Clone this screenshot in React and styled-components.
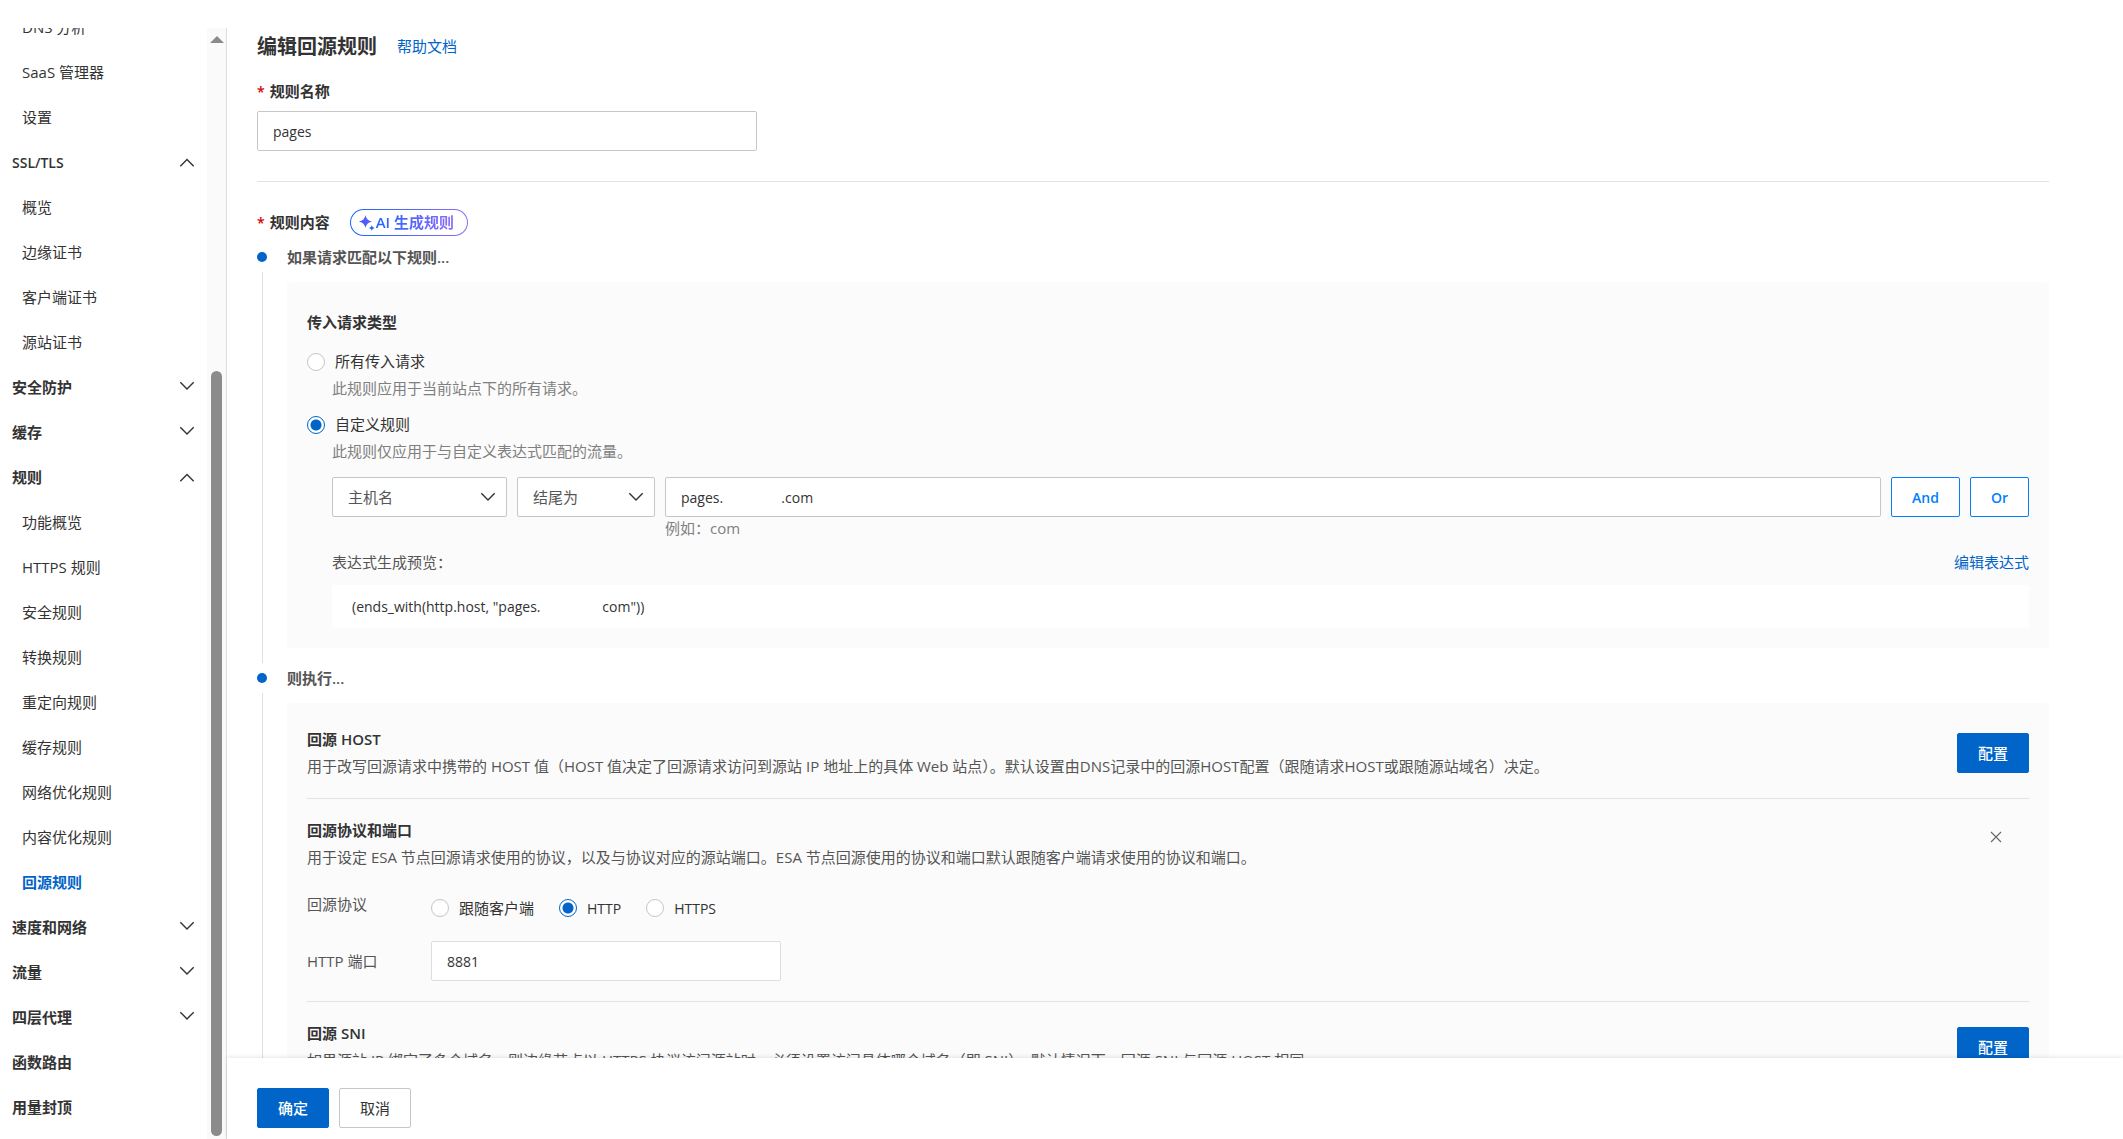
import * as React from "react"
import styled, { createGlobalStyle } from "styled-components"

const GlobalStyle = createGlobalStyle`
  * {
    box-sizing: border-box;
  }

  body {
    margin: 0;
    background: #fff;
  }

  body, button, input, select {
    font-family: "Open Sans", "Noto Sans CJK SC", sans-serif;
    font-size: 15px;
    line-height: 27px;
    color: #333;
  }
`;

const Page = styled.div`
  display: flex;
  height: 100vh;
  padding-top: 28px;
  overflow: hidden;
`;

/* sidebar */

const Sidebar = styled.aside`
  display: flex;
  flex: none;
  width: 227px;
  border-right: 1px solid #dcdcdc;
`;

/* the list is scrolled to its end */
const Nav = styled.nav`
  flex: 1;
  display: flex;
  flex-direction: column;
  justify-content: flex-end;
  padding-bottom: 9px;
  overflow: hidden;
`;

const NavLink = styled.a`
  flex: none;
  padding-left: 22px;
  line-height: 45px;
  color: ${(props) => (props.$active ? "#0064c8" : "#333")};
  font-weight: ${(props) => (props.$active ? 600 : 400)};
  text-decoration: none;
`;

const NavTopLink = styled(NavLink)`
  padding-left: 12px;
  font-weight: 600;
`;

const NavGroup = styled.button`
  flex: none;
  display: flex;
  align-items: center;
  justify-content: space-between;
  height: 45px;
  padding: 0 12px;
  border: 0;
  background: none;
  font-size: ${(props) => (props.$latin ? "14px" : "15px")};
  font-weight: 600;
  cursor: pointer;

  &[aria-expanded="false"] svg {
    margin-bottom: 4px;
  }
`;

const ScrollTrack = styled.div`
  display: flex;
  flex-direction: column;
  align-items: center;
  width: 19px;
  padding: 8px 0 3px;
  background: #fafafa;
`;

const ScrollArrow = styled.div`
  border: 7px solid transparent;
  border-top: 0;
  border-bottom-color: #8b8b8b;
`;

const ScrollRoom = styled.div`
  flex: 3 0 0;
`;

const ScrollThumb = styled.div`
  flex: 7 0 0;
  width: 11px;
  border-radius: 6px;
  background: #8b8b8b;
`;

/* main column */

const Main = styled.main`
  flex: 1;
  min-width: 0;
  display: flex;
  flex-direction: column;
`;

const Content = styled.div`
  flex: 1;
  min-height: 0;
  padding: 0 74px 0 30px;
  overflow: hidden;
`;

const TitleRow = styled.header`
  display: flex;
  align-items: center;
  gap: 20px;
  height: 36px;
  margin-bottom: 14px;
`;

const Title = styled.h1`
  margin: 0;
  font-size: 20px;
  font-weight: 600;
`;

const Link = styled.a`
  color: #0064c8;
  text-decoration: none;
`;

const FieldHead = styled.div`
  display: flex;
  align-items: center;
  gap: 20px;
  margin-bottom: 6px;
`;

const RequiredLabel = styled.label`
  font-weight: 600;

  &::before {
    content: "*";
    margin-right: 5px;
    font-size: 14px;
    color: #d50000;
  }
`;

const TextInput = styled.input`
  display: block;
  width: ${(props) => props.$width || "100%"};
  height: 40px;
  padding: 0 15px;
  border: 1px solid ${(props) => (props.$soft ? "#dedede" : "#c6c6c6")};
  border-radius: 2px;
  background: #fff;
  font-size: 14px;
  outline: 0;
`;

const Divider = styled.hr`
  margin: 30px 0 27px;
  border: 0;
  border-top: 1px solid #e3e3e3;
`;

const AiButton = styled.button`
  display: flex;
  align-items: center;
  gap: 1px;
  height: 27px;
  padding: 0 13px 0 8px;
  border: 1px solid transparent;
  border-radius: 14px;
  background: linear-gradient(#fff, #fff) padding-box,
    linear-gradient(90deg, #1766ff, #8f6bfa) border-box;
  cursor: pointer;
`;

const AiText = styled.span`
  font-weight: 600;
  line-height: 25px;
  color: transparent;
  background: linear-gradient(90deg, #1f66ff, #8f6bfa);
  background-clip: text;
`;

/* timeline steps */

const Step = styled.section`
  display: grid;
  grid-template-columns: 10px 1fr;
  column-gap: 20px;
`;

const Dot = styled.span`
  align-self: center;
  width: 10px;
  height: 10px;
  border-radius: 50%;
  background: #0064c8;
`;

const StepTitle = styled.h2`
  margin: 0;
  font-size: 15px;
  font-weight: 600;
  line-height: 30px;
  color: #555;
`;

const Rail = styled.div`
  justify-self: center;
  width: 1px;
  background: #e0e0e0;
`;

const Panel = styled.div`
  margin: 10px 0 15px;
  padding: ${(props) => props.$padding};
  border-radius: 4px;
  background: #fbfbfb;
`;

const PanelTitle = styled.h3`
  margin: 0 0 12px;
  font-size: 15px;
  font-weight: 600;
`;

const RadioLabel = styled.label`
  display: flex;
  align-items: center;
  gap: 10px;
  font-size: ${(props) => (props.$latin ? "14px" : "15px")};
`;

const Radio = styled.input`
  appearance: none;
  flex: none;
  width: 18px;
  height: 18px;
  margin: 0;
  border: 1px solid #c6c6c6;
  border-radius: 50%;
  background: #fff;

  &:checked {
    border-color: #0064c8;
    background: radial-gradient(circle, #0064c8 5px, #fff 6px);
  }
`;

const Indent = styled.div`
  padding-left: 25px;
`;

const Note = styled.p`
  margin: 0 0 ${(props) => props.$gap};
  color: #808080;
`;

const ConditionRow = styled.div`
  display: flex;
  align-items: flex-start;
  gap: 10px;
`;

const SelectBox = styled.div`
  position: relative;
  flex: none;
  width: ${(props) => props.$width};

  svg {
    position: absolute;
    top: 13px;
    right: 11px;
    pointer-events: none;
  }
`;

const Select = styled.select`
  appearance: none;
  display: block;
  width: 100%;
  height: 40px;
  padding: 0 15px;
  border: 1px solid #c6c6c6;
  border-radius: 2px;
  background: #fff;
  color: #555;
`;

const ValueField = styled.div`
  flex: 1;
  min-width: 0;
`;

const Hint = styled.p`
  margin: 0 0 9px;
  line-height: 23px;
  color: #808080;
`;

const PreviewHead = styled.div`
  display: flex;
  justify-content: space-between;
  margin-bottom: 9px;
  color: #555;
`;

const Preview = styled.pre`
  margin: 0;
  padding: 8px 20px;
  border-radius: 2px;
  background: #fff;
  font-family: inherit;
  font-size: 14px;
`;

/* buttons */

const Button = styled.button`
  flex: none;
  height: 40px;
  padding: 0 20px;
  border: 1px solid #c6c6c6;
  border-radius: 2px;
  background: #fff;
  cursor: pointer;
`;

const PrimaryButton = styled(Button)`
  border-color: #0064c8;
  background: #0064c8;
  color: #fff;
  font-weight: 500;
`;

const LogicButton = styled(Button)`
  border-color: #0080ff;
  color: #0080ff;
  font-size: 14px;
  font-weight: 600;
`;

const CloseButton = styled.button`
  display: flex;
  align-items: center;
  justify-content: center;
  width: 66px;
  height: 40px;
  padding: 0;
  border: 0;
  background: none;
  color: #666;
  cursor: pointer;
`;

/* origin settings */

const Setting = styled.div`
  padding: 18px 0;

  & + & {
    border-top: 1px solid #e3e3e3;
  }
`;

const SettingHead = styled.div`
  display: flex;
  align-items: ${(props) => (props.$open ? "flex-start" : "center")};
  justify-content: space-between;
`;

const SettingTitle = styled.h3`
  margin: 0;
  font-size: 15px;
  font-weight: 600;
`;

const SettingText = styled.p`
  margin: 0;
  color: #555;
`;

const FormGrid = styled.div`
  display: grid;
  grid-template-columns: 124px 1fr;
  row-gap: 16px;
  margin: 20px 0 2px;
`;

const FormLabel = styled.label`
  align-self: ${(props) => (props.$center ? "center" : "start")};
  color: #555;
`;

const RadioRow = styled.div`
  display: flex;
  align-items: center;
  gap: 25px;
  height: 34px;
`;

const Footer = styled.footer`
  z-index: 1;
  display: flex;
  gap: 10px;
  padding: 30px 30px 11px;
  background: #fff;
  box-shadow: 0 -1px 4px rgba(0, 0, 0, 0.1);
`;

const navItems = [
  { text: "DNS 分析" },
  { text: "SaaS 管理器" },
  { text: "设置" },
  { text: "SSL/TLS", group: true, open: true, latin: true },
  { text: "概览" },
  { text: "边缘证书" },
  { text: "客户端证书" },
  { text: "源站证书" },
  { text: "安全防护", group: true },
  { text: "缓存", group: true },
  { text: "规则", group: true, open: true },
  { text: "功能概览" },
  { text: "HTTPS 规则" },
  { text: "安全规则" },
  { text: "转换规则" },
  { text: "重定向规则" },
  { text: "缓存规则" },
  { text: "网络优化规则" },
  { text: "内容优化规则" },
  { text: "回源规则", active: true },
  { text: "速度和网络", group: true },
  { text: "流量", group: true },
  { text: "四层代理", group: true },
  { text: "函数路由", top: true },
  { text: "用量封顶", top: true },
]

const hostGap = " ".repeat(16)

const Chevron = ({ up }) => (
  <svg width="16" height="14" viewBox="0 0 16 14" fill="none" stroke="currentColor" strokeWidth="1.4">
    <path d={up ? "M1.3 10.3 8 3.6l6.7 6.7" : "M1.3 3.2 8 9.9l6.7-6.7"} />
  </svg>
)

const CloseIcon = () => (
  <svg width="12" height="12" viewBox="0 0 12 12" fill="none" stroke="currentColor" strokeWidth="1.1">
    <path d="M1 1l10 10M11 1 1 11" />
  </svg>
)

const Sparkles = () => (
  <svg width="16" height="16" viewBox="0 0 16 16">
    <defs>
      <linearGradient id="spark" x1="0" y1="1" x2="1" y2="0">
        <stop offset="0" stopColor="#1766ff" />
        <stop offset="1" stopColor="#8a55f5" />
      </linearGradient>
    </defs>
    <path fill="url(#spark)" d="M6.5 0c1 4 2.500 5.500 6.500 6.500-4 1-5.500 2.500-6.500 6.500-1-4-2.500-5.500-6.500-6.500 4-1 5.500-2.500 6.500-6.500z" />
    <path fill="#2a66ff" d="M12.800 10c.5 1.900 1.100 2.500 3 3-1.900.5-2.500 1.100-3 3-.5-1.900-1.100-2.500-3-3 1.900-.5 2.500-1.100 3-3z" />
  </svg>
)

const SideMenu = () => (
  <Sidebar>
    <Nav>
      {navItems.map((item) => {
        if (item.group) {
          return (
            <NavGroup key={item.text} type="button" $latin={item.latin} aria-expanded={!!item.open}>
              {item.text}
              <Chevron up={item.open} />
            </NavGroup>
          )
        }
        const Item = item.top ? NavTopLink : NavLink
        return (
          <Item key={item.text} href="#" $active={item.active}>
            {item.text}
          </Item>
        )
      })}
    </Nav>
    <ScrollTrack>
      <ScrollArrow />
      <ScrollRoom />
      <ScrollThumb />
    </ScrollTrack>
  </Sidebar>
)

const MatchPanel = () => (
  <Panel $padding="27px 20px 20px">
    <PanelTitle>传入请求类型</PanelTitle>
    <RadioLabel>
      <Radio type="radio" name="match" />
      所有传入请求
    </RadioLabel>
    <Indent>
      <Note $gap="9px">此规则应用于当前站点下的所有请求。</Note>
    </Indent>
    <RadioLabel>
      <Radio type="radio" name="match" defaultChecked />
      自定义规则
    </RadioLabel>
    <Indent>
      <Note $gap="12px">此规则仅应用于与自定义表达式匹配的流量。</Note>
      <ConditionRow>
        <SelectBox $width="175px">
          <Select aria-label="匹配字段">
            <option>主机名</option>
          </Select>
          <Chevron />
        </SelectBox>
        <SelectBox $width="138px">
          <Select aria-label="运算符">
            <option>结尾为</option>
          </Select>
          <Chevron />
        </SelectBox>
        <ValueField>
          <TextInput aria-label="匹配值" defaultValue={`pages.${hostGap}.com`} />
          <Hint>例如：com</Hint>
        </ValueField>
        <LogicButton type="button">And</LogicButton>
        <LogicButton type="button">Or</LogicButton>
      </ConditionRow>
      <PreviewHead>
        <span>表达式生成预览：</span>
        <Link href="#">编辑表达式</Link>
      </PreviewHead>
      <Preview>{`(ends_with(http.host, "pages.${hostGap} com"))`}</Preview>
    </Indent>
  </Panel>
)

const ActionPanel = () => (
  <Panel $padding="5px 20px">
    <Setting>
      <SettingHead>
        <div>
          <SettingTitle>回源 HOST</SettingTitle>
          <SettingText>
            用于改写回源请求中携带的 HOST 值（HOST 值决定了回源请求访问到源站 IP 地址上的具体 Web 站点）。默认设置由DNS记录中的回源HOST配置（跟随请求HOST或跟随源站域名）决定。
          </SettingText>
        </div>
        <PrimaryButton type="button">配置</PrimaryButton>
      </SettingHead>
    </Setting>
    <Setting>
      <SettingHead $open>
        <div>
          <SettingTitle>回源协议和端口</SettingTitle>
          <SettingText>
            用于设定 ESA 节点回源请求使用的协议，以及与协议对应的源站端口。ESA 节点回源使用的协议和端口默认跟随客户端请求使用的协议和端口。
          </SettingText>
        </div>
        <CloseButton type="button" aria-label="关闭">
          <CloseIcon />
        </CloseButton>
      </SettingHead>
      <FormGrid>
        <FormLabel as="span" id="protocol-label">回源协议</FormLabel>
        <RadioRow role="radiogroup" aria-labelledby="protocol-label">
          <RadioLabel>
            <Radio type="radio" name="protocol" />
            跟随客户端
          </RadioLabel>
          <RadioLabel $latin>
            <Radio type="radio" name="protocol" defaultChecked />
            HTTP
          </RadioLabel>
          <RadioLabel $latin>
            <Radio type="radio" name="protocol" />
            HTTPS
          </RadioLabel>
        </RadioRow>
        <FormLabel htmlFor="http-port" $center>HTTP 端口</FormLabel>
        <TextInput id="http-port" $width="350px" $soft defaultValue="8881" />
      </FormGrid>
    </Setting>
    <Setting>
      <SettingHead>
        <div>
          <SettingTitle>回源 SNI</SettingTitle>
          <SettingText>
            如果源站 IP 绑定了多个域名，则边缘节点以 HTTPS 协议访问源站时，必须设置访问具体哪个域名（即 SNI）。默认情况下，回源 SNI 与回源 HOST 相同。
          </SettingText>
        </div>
        <PrimaryButton type="button">配置</PrimaryButton>
      </SettingHead>
    </Setting>
  </Panel>
)

const App = () => {
  return (
    <Page>
      <GlobalStyle />
      <SideMenu />
      <Main>
        <Content>
          <TitleRow>
            <Title>编辑回源规则</Title>
            <Link href="#">帮助文档</Link>
          </TitleRow>
          <FieldHead>
            <RequiredLabel htmlFor="rule-name">规则名称</RequiredLabel>
          </FieldHead>
          <TextInput id="rule-name" $width="500px" defaultValue="pages" />
          <Divider />
          <FieldHead>
            <RequiredLabel as="span">规则内容</RequiredLabel>
            <AiButton type="button">
              <Sparkles />
              <AiText>AI 生成规则</AiText>
            </AiButton>
          </FieldHead>
          <Step>
            <Dot />
            <StepTitle>如果请求匹配以下规则...</StepTitle>
            <Rail />
            <MatchPanel />
          </Step>
          <Step>
            <Dot />
            <StepTitle>则执行...</StepTitle>
            <Rail />
            <ActionPanel />
          </Step>
        </Content>
        <Footer>
          <PrimaryButton type="button">确定</PrimaryButton>
          <Button type="button">取消</Button>
        </Footer>
      </Main>
    </Page>
  )
}

export default App
